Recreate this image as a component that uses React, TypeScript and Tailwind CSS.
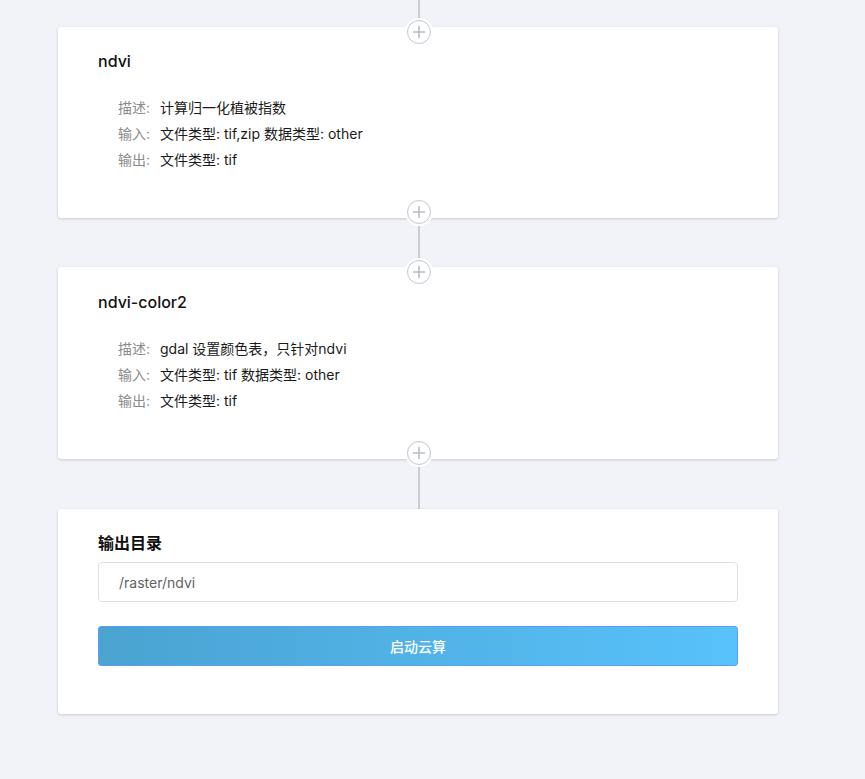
import React from "react";

const font = { fontFamily: 'Inter, "Noto Sans CJK SC", sans-serif' };

function Plus({ pos }: { pos: "top" | "bottom" }) {
  return (
    <div
      className={
        "absolute left-[349px] w-6 h-6 rounded-full bg-white border border-[#c2c6d0] ring-2 ring-white flex items-center justify-center z-10 " +
        (pos === "top" ? "top-[-7px]" : "bottom-[-6px]")
      }
    >
      <svg width="14" height="14" viewBox="0 0 14 14">
        <path d="M7 1.5v11M1.5 7h11" stroke="#b8bcc6" strokeWidth="1.6" strokeLinecap="round" />
      </svg>
    </div>
  );
}

function Line({ h }: { h: string }) {
  return (
    <div className={"w-[720px] flex " + h}>
      <div className="ml-[360px] w-[2px] h-full bg-[#c8ccd6]" />
    </div>
  );
}

function Row({ label, value }: { label: string; value: string }) {
  return (
    <div className="flex h-[26px] items-center text-[14px]">
      <span className="w-[42px] text-[#8a8a8a]">{label}</span>
      <span className="text-[#1a1a1a]">{value}</span>
    </div>
  );
}

function NodeCard({ title, rows, h, pt }: { title: string; rows: [string, string][]; h: string; pt: string }) {
  return (
    <div className={"relative w-[720px] bg-white rounded-[3px] shadow-[0_1px_3px_rgba(0,0,0,0.18)] pl-[40px] " + h + " " + pt}>
      <Plus pos="top" />
      <div className="text-[16px] leading-[24px] font-medium text-[#111]">{title}</div>
      <div className="pl-[20px] mt-[21px]">
        {rows.map(([l, v]) => (
          <Row key={l} label={l} value={v} />
        ))}
      </div>
      <Plus pos="bottom" />
    </div>
  );
}

export default function App() {
  return (
    <div className="min-h-[779px] w-full bg-[#f2f3f8]" style={font}>
      <div className="ml-[58px] flex flex-col">
        <Line h="h-[27px]" />
        <NodeCard
          title="ndvi"
          h="h-[191px]"
          pt="pt-[22px]"
          rows={[
            ["描述:", "计算归一化植被指数"],
            ["输入:", "文件类型: tif,zip 数据类型: other"],
            ["输出:", "文件类型: tif"],
          ]}
        />
        <Line h="h-[49px]" />
        <NodeCard
          title="ndvi-color2"
          h="h-[192px]"
          pt="pt-[23px]"
          rows={[
            ["描述:", "gdal 设置颜色表，只针对ndvi"],
            ["输入:", "文件类型: tif 数据类型: other"],
            ["输出:", "文件类型: tif"],
          ]}
        />
        <Line h="h-[50px]" />
        <div className="w-[720px] h-[205px] bg-white rounded-[3px] shadow-[0_1px_3px_rgba(0,0,0,0.18)] px-[40px] pt-[22px]">
          <div className="text-[16px] leading-[24px] font-bold text-[#111]">输出目录</div>
          <div className="mt-[7px] h-[40px] border border-[#dcdfe6] rounded-[4px] flex items-center pl-[20px] text-[14px] text-[#606266]">
            /raster/ndvi
          </div>
          <button className="mt-[24px] w-full h-[40px] rounded-[3px] border border-[#5c9ef6] bg-gradient-to-r from-[#4aa3d1] to-[#58c2fb] text-white text-[14px] font-medium flex items-center justify-center">
            启动云算
          </button>
        </div>
      </div>
    </div>
  );
}
